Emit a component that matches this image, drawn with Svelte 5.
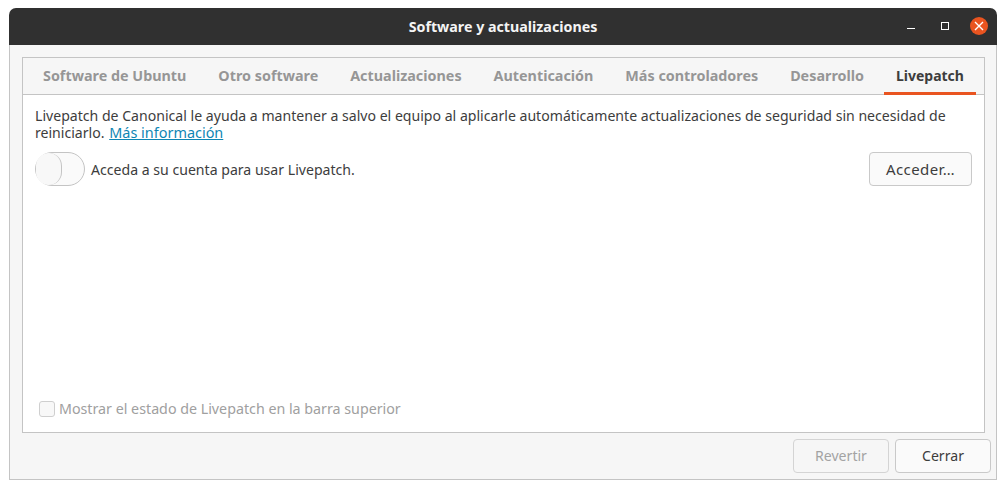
<script>
  const tabs = ['Software de Ubuntu', 'Otro software', 'Actualizaciones', 'Autenticación', 'Más controladores', 'Desarrollo', 'Livepatch'];
  let activeTab = 'Livepatch';
</script>

<div class="window">
  <header class="titlebar">
    <span class="title">Software y actualizaciones</span>
    <div class="controls">
      <svg class="minimize" width="10" height="10" viewBox="0 0 10 10"><path d="M1 7.5H9" stroke="#fff" stroke-width="1"/></svg>
      <svg width="10" height="10" viewBox="0 0 10 10"><rect x="1.5" y="1.5" width="7" height="7" fill="none" stroke="#fff" stroke-width="1"/></svg>
      <span class="close">
        <svg width="10" height="10" viewBox="0 0 10 10"><path d="M1 1L9 9M9 1L1 9" stroke="#fff" stroke-width="1.4"/></svg>
      </span>
    </div>
  </header>

  <div class="body">
    <div class="notebook">
      <div class="tabs">
        {#each tabs as tab}
          <button class="tab" class:active={activeTab === tab} onclick={() => (activeTab = tab)}>{tab}</button>
        {/each}
      </div>
      <div class="page">
        <p class="intro">
          Livepatch de Canonical le ayuda a mantener a salvo el equipo al aplicarle automáticamente actualizaciones de seguridad sin necesidad de reiniciarlo.
          <a href="#info">Más información</a>
        </p>
        <div class="row">
          <span class="switch"><span class="knob"></span></span>
          <span class="row-label">Acceda a su cuenta para usar Livepatch.</span>
          <button class="btn signin">Acceder…</button>
        </div>
        <label class="check">
          <span class="box"></span>
          Mostrar el estado de Livepatch en la barra superior
        </label>
      </div>
    </div>
    <div class="actions">
      <button class="btn action" disabled>Revertir</button>
      <button class="btn action">Cerrar</button>
    </div>
  </div>
</div>

<style>
:global(body) { background: #fff; }

.window {
  box-sizing: border-box;
  width: 988px;
  height: 472px;
  margin: 8px 0 0 9px;
  display: flex;
  flex-direction: column;
  font-family: "Noto Sans", "Open Sans", sans-serif;
  font-size: 14.1px;
  color: #3d3d3d;
}

.titlebar {
  height: 37px;
  flex-shrink: 0;
  background: #303030;
  border-radius: 7px 7px 0 0;
  display: flex;
  align-items: center;
  justify-content: center;
  position: relative;
}
.title { color: #f4f4f4; font-weight: 700; font-size: 14.25px; }
.controls {
  position: absolute;
  right: 9px;
  top: 9px;
  display: flex;
  align-items: center;
  gap: 20px;
}
.minimize { margin-right: 4px; }
.close {
  width: 18px;
  height: 18px;
  border-radius: 50%;
  background: #e95420;
  display: flex;
  align-items: center;
  justify-content: center;
}

.body {
  flex: 1;
  background: #f6f6f6;
  border: 1px solid #c4c4c4;
  border-top: none;
  padding: 12px 11px 0 12px;
  display: flex;
  flex-direction: column;
}

.notebook {
  height: 376px;
  box-sizing: border-box;
  border: 1px solid #c4c4c4;
  display: flex;
  flex-direction: column;
}
.tabs {
  height: 37px;
  flex-shrink: 0;
  box-sizing: border-box;
  border-bottom: 1px solid #c4c4c4;
  display: flex;
  padding: 0 8px;
  justify-content: space-between;
}
.tab {
  background: none;
  border: none;
  padding: 0 12px;
  margin-bottom: -1px;
  font: inherit;
  font-size: 14.35px;
  font-weight: 700;
  color: #969696;
  border-bottom: 3px solid transparent;
}
.tab.active { color: #3d3d3d; border-bottom-color: #e95420; font-size: 14px; }

.page {
  flex: 1;
  background: #fff;
  padding: 12px;
  display: flex;
  flex-direction: column;
}
.intro { margin: 0; line-height: 17px; }
.intro a { color: #0e86b4; font-size: 14.45px; margin-left: 1px; }

.row {
  display: flex;
  align-items: center;
  margin-top: 11px;
}
.switch {
  width: 50px;
  height: 34px;
  box-sizing: border-box;
  border: 1px solid #c4c4c4;
  border-radius: 17px;
  background: #fafafa;
  margin-right: 6px;
  display: flex;
}
.knob {
  width: 26px;
  height: 32px;
  box-sizing: border-box;
  border-right: 1px solid #c4c4c4;
  border-radius: 16px;
  background: #f8f8f8;
}
.row-label { flex: 1; }

.btn {
  box-sizing: border-box;
  height: 34px;
  border: 1px solid #c9c9c9;
  border-radius: 4px;
  background: #fafafa;
  font: inherit;
  color: #3d3d3d;
  padding: 0;
}
.btn:disabled { color: #a3a3a3; background: #f6f6f6; border-color: #d4d4d4; }
.signin { width: 103px; font-size: 15px; letter-spacing: 0.4px; }

.check {
  margin-top: auto;
  display: flex;
  align-items: center;
  gap: 4px;
  color: #a0a0a0;
  font-size: 14.25px;
  padding-left: 4px;
  margin-bottom: 2px;
}
.box {
  width: 16px;
  height: 16px;
  box-sizing: border-box;
  border: 1px solid #cfcfcf;
  border-radius: 3px;
  background: #f8f8f8;
}

.actions {
  display: flex;
  justify-content: flex-end;
  gap: 6px;
  margin-top: 6px;
  margin-right: -6px;
}
.action { width: 96px; padding-bottom: 2px; }
</style>
